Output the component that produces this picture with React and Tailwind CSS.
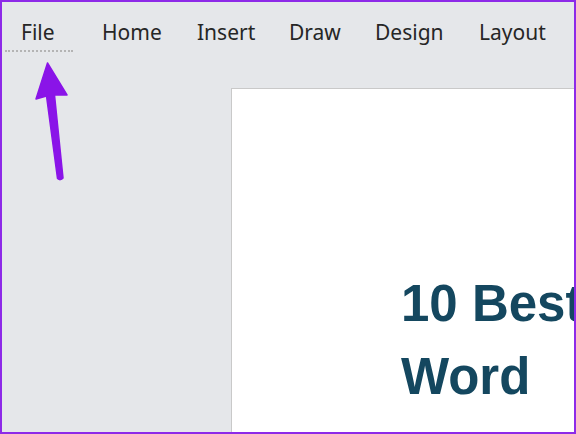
import React from "react";

const menu = [
  { label: "File", w: "w-[81px]" },
  { label: "Home", w: "w-[95px]" },
  { label: "Insert", w: "w-[92px]" },
  { label: "Draw", w: "w-[86px]" },
  { label: "Design", w: "w-[104px]" },
  { label: "Layout", w: "w-[80px]" },
];

function Arrow() {
  return (
    <svg
      className="absolute left-0 top-0"
      width="100"
      height="200"
      viewBox="0 0 100 200"
    >
      <path
        d="M45.5 61 L34 97 L44.5 94 L55.5 176.5 Q58.5 179 61 176 L52.5 93 L65 93 Z"
        fill="#8a14e8"
        stroke="#8a14e8"
        strokeWidth="1.5"
        strokeLinejoin="round"
      />
    </svg>
  );
}

export default function App() {
  return (
    <div className="relative w-[576px] h-[434px] overflow-hidden border-2 border-[#8d2ae8] bg-[#e5e7ea] flex flex-col">
      {/* ribbon tabs */}
      <div
        className="flex items-start pt-[15px] pl-[19px] h-[86px] shrink-0 text-[21px] text-[#262626]"
        style={{ fontFamily: '"Noto Sans", "Open Sans", sans-serif' }}
      >
        {menu.map((m) => (
          <div key={m.label} className={`${m.w} shrink-0 flex flex-col`}>
            <span className="leading-[30px]">{m.label}</span>
          </div>
        ))}
      </div>
      <div className="absolute left-[3px] top-[48px] w-[68px] border-t-2 border-dotted border-[#b4b4b4]" />

      <div className="flex flex-1">
        <div className="w-[229px] shrink-0" />
        <div className="flex-1 bg-white border-l border-t border-[#c9c9c9] pl-[169px] pt-[178px] -mr-[4px]">
          <h1
            className="text-[51px] leading-[73px] font-bold text-[#14475f] whitespace-nowrap"
            style={{ fontFamily: '"Liberation Sans", Arial, sans-serif' }}
          >
            10 Best
            <br />
            Word
          </h1>
        </div>
      </div>

      <Arrow />
    </div>
  );
}
